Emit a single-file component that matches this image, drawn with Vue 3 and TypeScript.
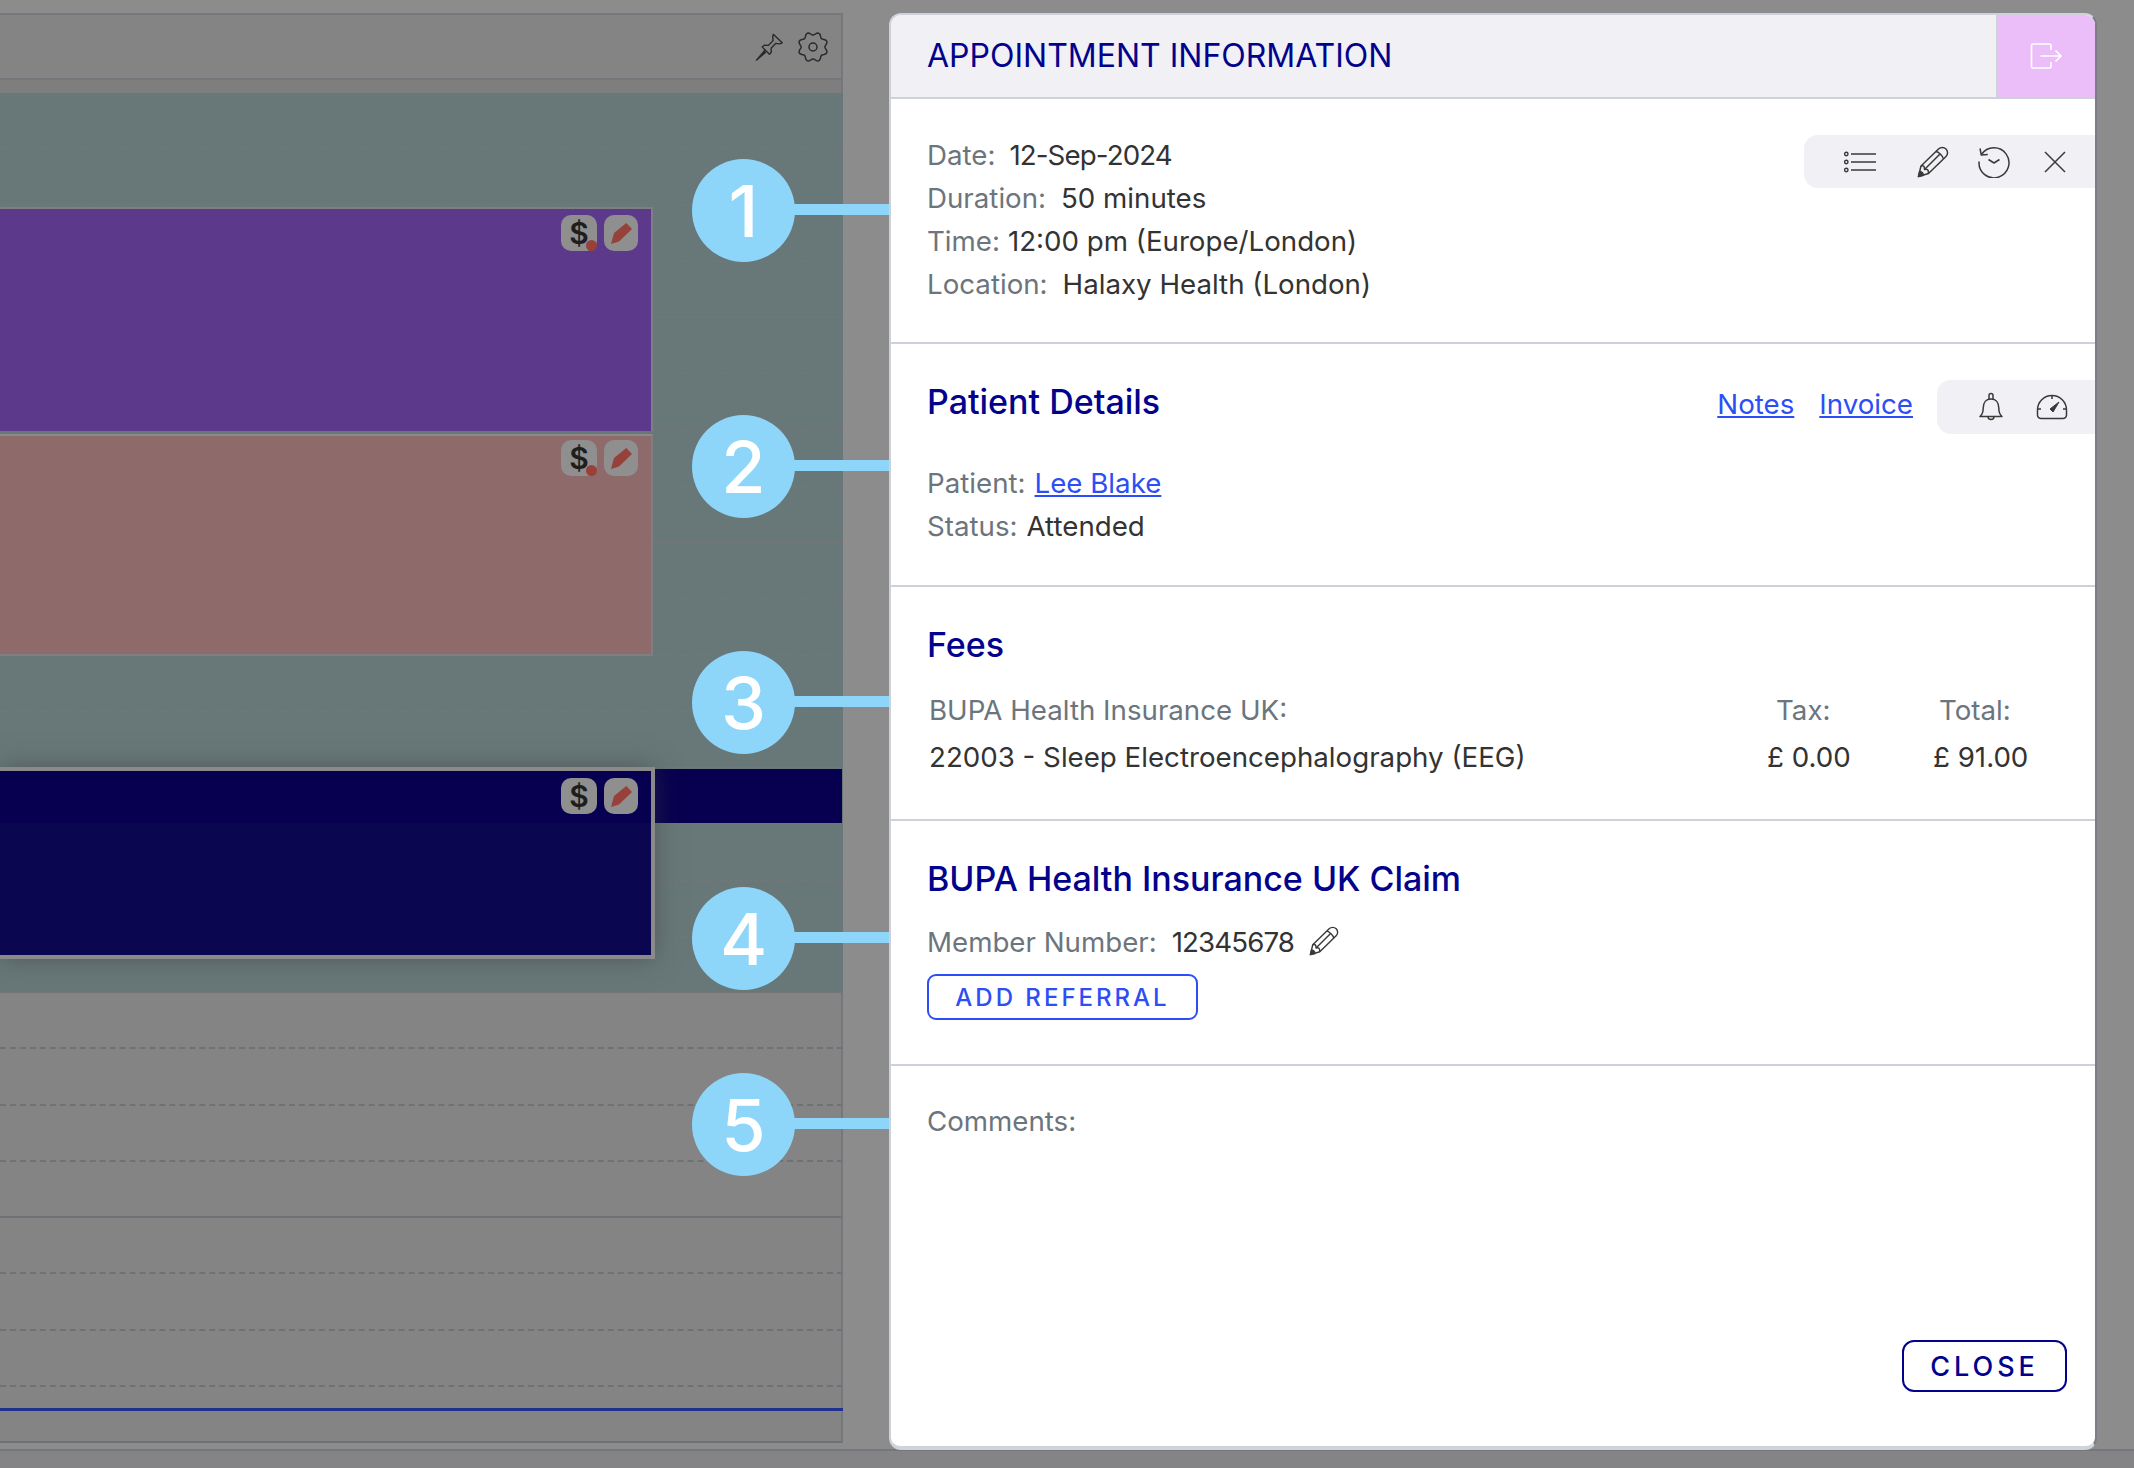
<script setup lang="ts">
// 24 quarter-hour rows; every 4th one closes the hour with a solid line
const slots = Array.from({ length: 24 }, (_, i) => ({
  id: i,
  hour: i % 4 === 3,
  busy: i < 16,
}));

const callouts = [
  { n: 1, top: 159 },
  { n: 2, top: 415 },
  { n: 3, top: 651 },
  { n: 4, top: 887 },
  { n: 5, top: 1073 },
];

const details = [
  { label: 'Date:', value: '12-Sep-2024', gap: 14, tight: true },
  { label: 'Duration:', value: '50 minutes', gap: 15, tight: false },
  { label: 'Time:', value: '12:00 pm (Europe/London)', gap: 8, tight: false },
  { label: 'Location:', value: 'Halaxy Health (London)', gap: 15, tight: false },
];

const events = [
  { id: 'purple', dot: true },
  { id: 'rose', dot: true },
  { id: 'navy', dot: false },
];

// wavy outline with 8 teeth
const gearPath = Array.from({ length: 96 }, (_, i) => {
  const a = (i / 96) * Math.PI * 2 + Math.PI / 8;
  const r = 13.4 + 1.5 * Math.cos(8 * (a - Math.PI / 8));
  const x = 16 + r * Math.cos(a);
  const y = 16 + r * Math.sin(a);
  return `${i === 0 ? 'M' : 'L'}${x.toFixed(2)} ${y.toFixed(2)}`;
}).join(' ') + 'z';
</script>

<template>
  <div class="page">
    <section class="calendar">
      <div class="cal-bar">
        <svg class="cal-icon" viewBox="0 0 32 32" fill="none" stroke="#2b2b2b" stroke-width="1.5" stroke-linejoin="round">
          <path d="M19.5 2.5 29 11.5l-2.5 1.2-4.3-.6-5 5.2.2 4.2-2 2.2-7.7-7.600 2.300-2 4.200.2 5.100-5.100-.4-4.300z" />
          <path d="M10.500 19.500 1.500 30l10-8.500" fill="#2b2b2b" />
        </svg>
        <svg class="cal-icon gear" viewBox="0 0 32 32" fill="none" stroke="#2b2b2b" stroke-width="1.5" stroke-linejoin="round">
          <path :d="gearPath" />
          <circle cx="16" cy="16" r="4" />
        </svg>
      </div>
      <div class="cal-gap"></div>
      <div class="cal-grid">
        <div
          v-for="slot in slots"
          :key="slot.id"
          class="slot"
          :class="{ hour: slot.hour, busy: slot.busy }"
        ></div>

        <div class="now-line"></div>
        <div class="navy-strip"></div>

        <div v-for="ev in events" :key="ev.id" class="event" :class="ev.id">
          <div class="badges">
            <span class="badge dollar">$<i v-if="ev.dot" class="dot"></i></span>
            <span class="badge">
              <svg viewBox="0 0 21 21" width="21" height="21">
                <path d="M15.300 0 21 6 8 18.500 0 21l3-11z" fill="#96423a" />
              </svg>
            </span>
          </div>
        </div>
      </div>
      <div class="cal-footer"></div>
    </section>

    <div
      v-for="c in callouts"
      :key="c.n"
      class="callout"
      :style="{ top: c.top + 'px' }"
    >
      <span class="circle">{{ c.n }}</span>
      <span class="stem"></span>
    </div>

    <aside class="modal">
      <header class="modal-head">
        <h1>APPOINTMENT INFORMATION</h1>
        <button class="exit" type="button" aria-label="Leave">
          <svg viewBox="0 0 32 26" width="32" height="26" fill="none" stroke="#fff" stroke-width="1.7" stroke-linejoin="round">
            <path d="M21 7V2.500A1.500 1.500 0 0 0 19.500 1H3A1.500 1.500 0 0 0 1.500 2.500v21A1.500 1.500 0 0 0 3 25h16.500a1.500 1.500 0 0 0 1.500-1.500V19" />
            <path d="M10.500 13H31M25.500 7.500 31 13l-5.500 5.500" />
          </svg>
        </button>
      </header>

      <section class="block info">
        <div v-for="row in details" :key="row.label" class="row">
          <span class="lbl" :style="{ marginRight: row.gap + 'px' }">{{ row.label }}</span>
          <span class="val" :class="{ digits: row.tight }">{{ row.value }}</span>
        </div>
        <div class="tools tools-top">
          <svg class="first-tool" viewBox="0 0 32 22" width="32" height="22" fill="none" stroke="#3a3a3a" stroke-width="1.4">
            <circle cx="2.300" cy="3" r="1.700" /><circle cx="2.300" cy="11" r="1.700" /><circle cx="2.300" cy="19" r="1.700" />
            <path d="M7 3h25M7 11h25M7 19h25" />
          </svg>
          <svg viewBox="0 0 32 32" width="32" height="32" fill="none" stroke="#3a3a3a" stroke-width="1.500" stroke-linejoin="round">
            <path d="M1.500 30.500 4 20 21.500 3a5 5 0 0 1 7.500 7.500L11.500 27.500z" />
            <path d="M4 20c3-.8 3.500.5 3.500 3.500 3-.8 4 .4 4 4M19 5.500c2.500.2 7 4.500 7.500 7.500M7.500 23.500 23 8" />
            <path d="M1.500 30.500 2.700 25.500c2 .2 3.500 1.700 3.700 3.800z" fill="#3a3a3a" />
          </svg>
          <svg class="history-tool" viewBox="0 0 32 32" width="32" height="32" fill="none" stroke="#3a3a3a" stroke-width="1.500" stroke-linejoin="round">
            <path d="M3.500 8.500A15 15 0 1 1 1 16c0 1 0 2 .3 3" />
            <path d="M2 2.500 3.300 9l6.500-.6" />
            <path d="M10.500 13.500 16 17l5.500-3.500" />
          </svg>
          <svg viewBox="0 0 22 22" width="22" height="22" fill="none" stroke="#3a3a3a" stroke-width="1.500">
            <path d="M1 1l20 20M21 1 1 21" />
          </svg>
        </div>
      </section>

      <section class="block patient">
        <div class="title-row">
          <h2>Patient Details</h2>
          <a class="link" href="#">Notes</a>
          <a class="link" href="#">Invoice</a>
        </div>
        <div class="row first"><span class="lbl gap-s">Patient:</span><a class="link" href="#">Lee Blake</a></div>
        <div class="row"><span class="lbl gap-s">Status:</span><span class="val">Attended</span></div>
        <div class="tools tools-side">
          <svg viewBox="0 0 24 30" width="24" height="30" fill="none" stroke="#3a3a3a" stroke-width="1.500" stroke-linejoin="round">
            <path d="M1 24.500h22c-2.500-2-3.200-4-3.200-8.500 0-5-2.500-9-7.800-9s-7.800 4-7.800 9c0 4.500-.7 6.500-3.200 8.500z" />
            <path d="M10 7V3.500a2 2 0 0 1 4 0V7M9 24.500a3 3 0 0 0 6 0" />
          </svg>
          <svg viewBox="0 0 32 26" width="32" height="26" fill="none" stroke="#3a3a3a" stroke-width="1.500" stroke-linejoin="round">
            <path d="M5 24.500h22a3.500 3.500 0 0 0 3.500-3.500v-5a14.500 14.500 0 0 0-29 0v5A3.500 3.500 0 0 0 5 24.500z" />
            <path d="M16 1.500v3.500M1.600 15H5M27 15h3.400" />
            <path d="M23 8 17 18l-3-3z" fill="#3a3a3a" stroke-width="1" />
          </svg>
        </div>
      </section>

      <section class="block fees">
        <h2>Fees</h2>
        <div class="fee-grid">
          <span class="lbl">BUPA Health Insurance UK:</span>
          <span class="lbl tax">Tax:</span>
          <span class="lbl total">Total:</span>
          <span class="val">22003 - Sleep Electroencephalography (EEG)</span>
          <span class="val tax">£ 0.00</span>
          <span class="val total">£ 91.00</span>
        </div>
      </section>

      <section class="block claim">
        <h2>BUPA Health Insurance UK Claim</h2>
        <div class="row member">
          <span class="lbl">Member Number:</span>
          <span class="val digits">12345678</span>
          <svg class="member-edit" viewBox="0 0 32 32" width="30" height="30" fill="none" stroke="#3a3a3a" stroke-width="1.500" stroke-linejoin="round">
            <path d="M1.500 30.500 4 20 21.500 3a5 5 0 0 1 7.500 7.500L11.500 27.500z" />
            <path d="M4 20c3-.8 3.500.5 3.500 3.500 3-.8 4 .4 4 4M19 5.500c2.500.2 7 4.500 7.500 7.500M7.500 23.500 23 8" />
            <path d="M1.500 30.500 2.700 25.500c2 .2 3.500 1.700 3.700 3.800z" fill="#3a3a3a" />
          </svg>
        </div>
        <button class="btn-referral" type="button">ADD REFERRAL</button>
      </section>

      <section class="block comments">
        <span class="lbl">Comments:</span>
        <button class="btn-close" type="button">CLOSE</button>
      </section>
    </aside>
  </div>
</template>

<style>
body {
  margin: 0;
  background: #8c8c8c;
}
</style>

<style scoped>
.page {
  position: relative;
  width: 2134px;
  height: 1468px;
  overflow: hidden;
  background: #8c8c8c;
  font-family: Inter, "Liberation Sans", sans-serif;
  color: #333;
}

/* calendar behind the overlay */
.calendar {
  display: flex;
  flex-direction: column;
  padding-top: 13px;
  height: 100%;
  box-sizing: border-box;
}

.cal-bar {
  width: 843px;
  height: 67px;
  box-sizing: border-box;
  border-top: 2px solid #74787c;
  border-right: 2px solid #74787c;
  border-bottom: 2px solid #74787c;
  background: #848484;
  display: flex;
  justify-content: flex-end;
  align-items: center;
  gap: 12px;
  padding: 0 12px 0 0;
}

.cal-icon {
  width: 30px;
  height: 30px;
}

.cal-icon.gear {
  width: 32px;
  height: 32px;
}

.cal-gap {
  width: 843px;
  height: 13px;
  box-sizing: border-box;
  background: #7e7e7e;
  border-right: 2px solid #74787c;
}

.cal-grid {
  position: relative;
  width: 843px;
  box-sizing: border-box;
  background: #848484;
}

.slot {
  height: 56.25px;
  box-sizing: border-box;
  border-bottom: 2px dashed #6e7276;
  border-right: 2px solid #74787c;
}

.slot.hour {
  border-bottom: 2px solid #6e7276;
}

.slot.busy {
  background: #687878;
  border-right: 0;
  border-bottom: 1px dashed #747779;
}

.slot.busy.hour {
  border-bottom: 1px solid #747779;
}

.now-line {
  position: absolute;
  left: 0;
  right: 0;
  top: 1315px;
  height: 3px;
  background: #20308e;
}

.navy-strip {
  position: absolute;
  left: 650px;
  right: 1px;
  top: 676px;
  height: 54px;
  background: #070050;
}

.event {
  position: absolute;
  left: 0;
  width: 653px;
  box-sizing: border-box;
  display: flex;
  justify-content: flex-end;
  align-items: flex-start;
}

.event.purple {
  top: 114px;
  height: 224px;
  background: #5d398b;
  border-top: 2px solid #7f7f83;
  border-right: 2px solid #7f7f83;
}

.event.rose {
  top: 341px;
  height: 222px;
  background: #8f6a6a;
  border-right: 2px solid #7f7f83;
  border-bottom: 2px solid #7f7f83;
  border-top: 2px solid #8a8a8a;
}

.event.navy {
  top: 674px;
  width: 655px;
  height: 192px;
  background: linear-gradient(#070050 52px, #0b0650 52px);
  border: 4px solid #8a8a8a;
  border-left: 0;
  box-shadow: 0 0 24px rgba(60, 60, 60, 0.5);
}

.badges {
  display: flex;
  gap: 7px;
  margin: 6px 13px 0 0;
}

.event.rose .badges {
  margin-top: 4px;
}

.event.navy .badges {
  margin: 7px 13px 0 0;
}

.badge {
  position: relative;
  width: 34px;
  height: 36px;
  border-radius: 10px;
  background: #8f8f8f;
  display: flex;
  align-items: center;
  justify-content: center;
}

.badge.dollar {
  width: 36px;
  font: 600 30px Inter, sans-serif;
  color: #1e1e1e;
}

.dot {
  position: absolute;
  right: 0;
  bottom: 0;
  width: 11px;
  height: 11px;
  border-radius: 50%;
  background: #994139;
}

.cal-footer {
  flex: 1;
  margin-top: 6px;
  border-top: 2px solid #74787c;
  background: #848486;
}

/* numbered callouts */
.callout {
  position: absolute;
  left: 692px;
  display: flex;
  align-items: center;
}

.circle {
  width: 103px;
  height: 103px;
  border-radius: 50%;
  background: #8dd6f9;
  color: #fff;
  font: 500 72px/103px Inter, sans-serif;
  text-align: center;
}

.stem {
  width: 96px;
  height: 11px;
  margin: 0 0 2px -1px;
  background: #8dd6f9;
}

/* appointment modal */
.modal {
  position: absolute;
  left: 889px;
  top: 13px;
  width: 1208px;
  height: 1437px;
  box-sizing: border-box;
  display: flex;
  flex-direction: column;
  background: #fff;
  border: 2px solid #cdd1d8;
  border-right-color: #7b7f85;
  border-bottom-width: 4px;
  border-bottom-color: #d0d3d8;
  border-radius: 12px;
  overflow: hidden;
}

.modal-head {
  flex: none;
  height: 84px;
  box-sizing: border-box;
  display: flex;
  justify-content: space-between;
  background: #f0f0f5;
  border-bottom: 2px solid #cdd1d8;
}

.modal-head h1 {
  margin: 0 0 0 36px;
  font-size: 32px;
  font-weight: 400;
  line-height: 82px;
  color: #02028c;
}

.exit {
  width: 99px;
  padding: 0;
  border: 0;
  border-left: 1px solid #cdd1d8;
  background: #ebbdf9;
  display: flex;
  align-items: center;
  justify-content: center;
}

.block {
  position: relative;
  box-sizing: border-box;
  padding: 0 0 0 36px;
  border-bottom: 2px solid #cdd1d8;
}

.block:last-child {
  border-bottom: 0;
}

.info {
  flex: none;
  height: 245px;
  padding-top: 35px;
}

.patient {
  flex: none;
  height: 243px;
  padding-top: 36px;
}

.fees {
  flex: none;
  height: 234px;
  padding-top: 36px;
}

.claim {
  flex: none;
  height: 245px;
  padding-top: 36px;
}

.comments {
  flex: 1;
  padding-top: 38px;
}

.row {
  font-size: 27.7px;
  line-height: 43px;
  white-space: nowrap;
}

.lbl {
  color: #6c757d;
  font-size: 27.7px;
}

.val {
  color: #333;
  font-size: 27.7px;
}

.digits {
  letter-spacing: -0.9px;
}

.gap-s {
  margin-right: 9px;
}

.link {
  color: #2d4ef5;
  font-size: 27.7px;
  text-decoration: underline;
}

.tools {
  position: absolute;
  right: 0;
  display: flex;
  align-items: center;
  box-sizing: border-box;
  background: #f0f0f5;
  border-radius: 14px 0 0 14px;
}

.tools-top {
  top: 36px;
  width: 291px;
  height: 53px;
  padding-left: 40px;
  gap: 32px;
}

.first-tool {
  margin-right: 9px;
}

.history-tool {
  margin: 0 2px 0 -3px;
}

.tools-side {
  top: 36px;
  width: 158px;
  height: 54px;
  padding-left: 42px;
  gap: 33px;
}

h2 {
  margin: 0;
  font-size: 34px;
  font-weight: 500;
  line-height: 44px;
  color: #02028c;
}

.title-row {
  display: flex;
  align-items: center;
  gap: 25px;
  padding-right: 182px;
}

.title-row h2 {
  margin-right: auto;
}

.title-row .link {
  margin-top: 3px;
}

.patient .row.first {
  margin-top: 38px;
}

.fee-grid {
  display: grid;
  grid-template-columns: 838px 166px 1fr;
  row-gap: 5px;
  margin: 22px 0 0 2px;
  line-height: 42px;
}

.tax,
.total {
  justify-self: start;
}

.lbl.tax {
  margin-left: 9px;
}

.lbl.total {
  margin-left: 6px;
}

.member {
  display: flex;
  align-items: center;
  gap: 15px;
  margin-top: 20px;
}

.member-edit {
  margin-top: -4px;
}

.btn-referral {
  display: block;
  width: 271px;
  height: 46px;
  margin-top: 10px;
  padding: 0;
  border: 2px solid #2d4ef5;
  border-radius: 9px;
  background: #fff;
  color: #2d4ef5;
  font: 500 24px Inter, sans-serif;
  letter-spacing: 3px;
}

.btn-close {
  position: absolute;
  right: 28px;
  top: 274px;
  width: 165px;
  height: 52px;
  padding: 0;
  border: 2px solid #02028c;
  border-radius: 12px;
  background: #fff;
  color: #02028c;
  font: 500 27px Inter, sans-serif;
  letter-spacing: 4px;
}
</style>
